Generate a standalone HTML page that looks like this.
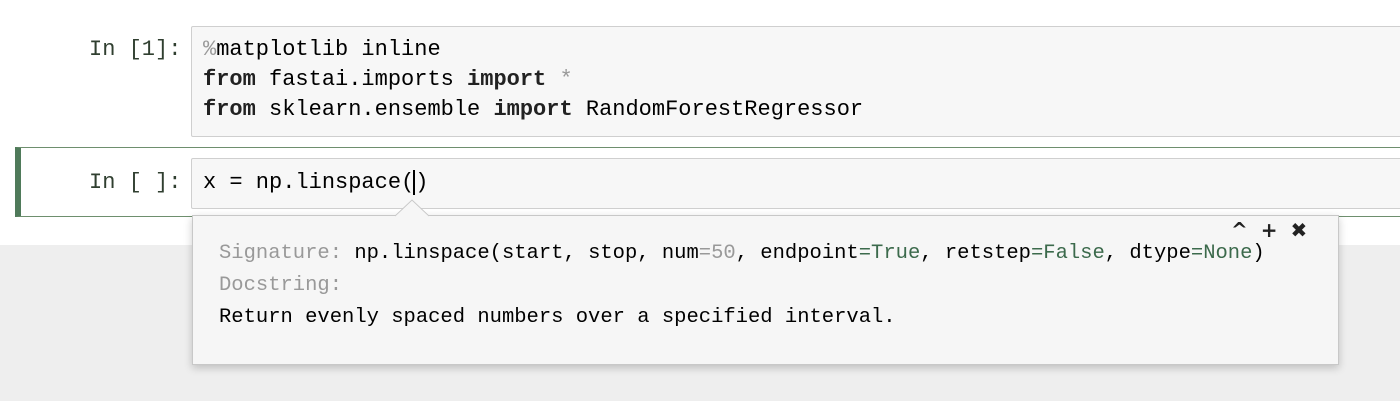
<!DOCTYPE html>
<html><head><style>
body{margin:0;width:1400px;height:401px;overflow:hidden;background:#eeeeee;position:relative;font-family:"Liberation Mono",monospace;font-size:22px;}
.top{position:absolute;left:0;top:0;width:1400px;height:245px;background:#fff;}
.box{position:absolute;background:#f7f7f7;border:1px solid #cfcfcf;border-radius:2px;}
.t{position:absolute;white-space:pre;line-height:30px;color:#000;}
.p{color:#303f30;}
b{font-weight:bold;color:#222;}
.g{color:#999;}
.gr{color:#3c6a4c;}
</style></head><body>
<div class="top"></div>
<div class="box" style="left:191px;top:26px;width:1220px;height:109px;"></div>
<div class="t p" style="left:89px;top:35px;">In [1]:</div>
<div class="t" style="left:203px;top:35px;"><span class="g">%</span>matplotlib inline
<b>from</b> fastai.imports <b>import</b> <span class="g">*</span>
<b>from</b> sklearn.ensemble <b>import</b> RandomForestRegressor</div>
<div style="position:absolute;left:15px;top:147px;width:1400px;height:70px;border:1px solid #6e8f6e;border-left:6px solid #4f7a5a;background:#fff;box-sizing:border-box;"></div>
<div class="box" style="left:191px;top:158px;width:1220px;height:49px;"></div>
<div class="t p" style="left:89px;top:168px;">In [ ]:</div>
<div class="t" style="left:203px;top:168px;">x = np.linspace(<span style="border-left:2px solid #000;margin-left:-1px"></span>)</div>
<div style="position:absolute;left:192px;top:215px;width:1145px;height:148px;background:#f6f6f6;border:1px solid #c8c8c8;box-shadow:0 3px 8px rgba(0,0,0,0.2);"></div>
<svg style="position:absolute;left:395px;top:199px" width="34" height="18"><path d="M0 17 L17 1 L34 17" fill="#f6f6f6" stroke="#c8c8c8"/></svg>
<div class="t" style="left:219px;top:238px;font-size:20.5px;line-height:32px;"><span class="g">Signature:</span> np.linspace(start, stop, num<span class="g">=50</span>, endpoint<span class="gr">=True</span>, retstep<span class="gr">=False</span>, dtype<span class="gr">=None</span>)
<span class="g">Docstring:</span>
Return evenly spaced numbers over a specified interval.</div>
<div style="position:absolute;left:1231px;top:218px;font-family:'DejaVu Sans',sans-serif;font-size:20px;font-weight:bold;color:#222;">^ <span style="margin-left:6px">+</span> <span style="margin-left:6px">✖</span></div>
</body></html>
